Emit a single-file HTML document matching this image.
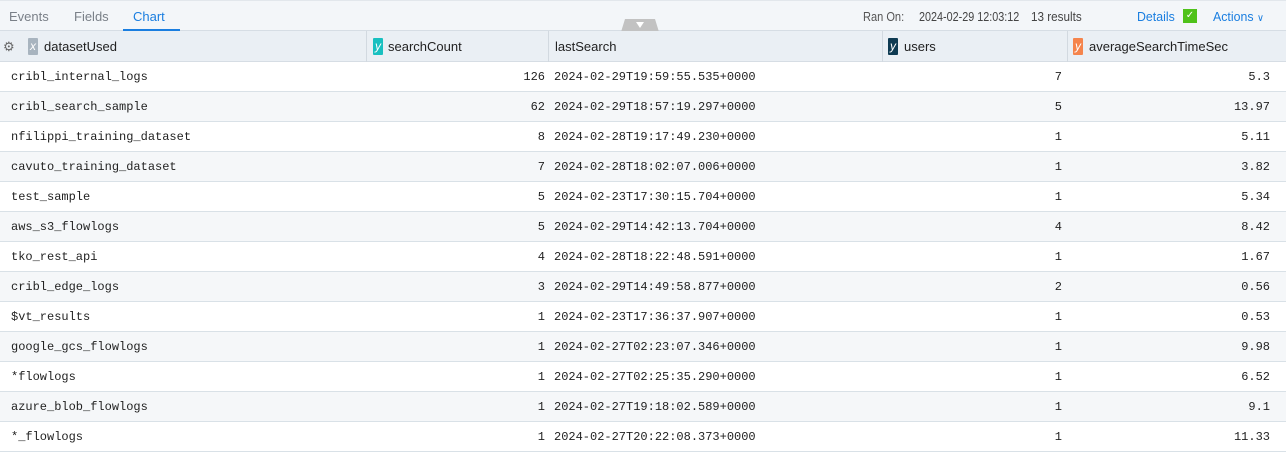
<!DOCTYPE html>
<html><head><meta charset="utf-8"><style>
*{box-sizing:border-box;margin:0;padding:0}
body{width:1286px;height:464px;background:#fff;font-family:"Liberation Sans",sans-serif;overflow:hidden;position:relative}
.top{position:absolute;left:0;top:0;width:1286px;height:31px;background:#f3f6f9;border-top:1px solid #e2e7ec;border-bottom:1px solid #d6dde4}
.tab{position:absolute;top:8px;font-size:13px;color:#7a8088}
.tab.on{color:#1a7ee0}
.ul{position:absolute;top:28px;height:2px;background:#1a7ee0}
.info{position:absolute;top:8px;font-size:13px;color:#555;white-space:nowrap;transform-origin:0 0}
.blue{color:#1a7ee0}
.chk{position:absolute;left:1183px;top:8px;width:14px;height:14px;background:#4fc21a;color:#fff;font-size:10px;text-align:center;line-height:14px}
.hdr{position:absolute;left:0;top:31px;width:1286px;height:31px;background:#eaeff4;border-bottom:1px solid #d6dde4}
.hc{position:absolute;top:0;height:31px;border-right:1px solid #d2d9e0;font-size:13px;color:#222;line-height:31px}
.b{position:absolute;top:7px;width:10px;height:17px;color:#fff;font-size:12px;font-style:italic;line-height:17px;text-align:center;border-radius:1px}
.row{position:absolute;left:0;width:1286px;height:30px;border-bottom:1px solid #d9e1e7;font-family:"Liberation Mono",monospace;font-size:12px;color:#222;line-height:30px}
.row span{position:absolute;top:0}
.g{background:#f5f7f9}
.r{text-align:right}
</style></head><body>
<div class="top">
<div class="tab" style="left:9px">Events</div>
<div class="tab" style="left:74px">Fields</div>
<div class="tab on" style="left:133px">Chart</div>
<div class="ul" style="left:123px;width:57px"></div>
<svg style="position:absolute;left:621px;top:18px" width="40" height="13"><polygon points="4,0 34,0 38,13 0,13" fill="#c2c2c2"/><polygon points="15,3 23,3 19,9" fill="#fff"/></svg>
<div class="info" style="left:863px;transform:scaleX(0.85)">Ran On:</div>
<div class="info" style="left:919px;color:#444;transform:scaleX(0.83)">2024-02-29 12:03:12</div>
<div class="info" style="left:1031px;color:#444;transform:scaleX(0.9)">13 results</div>
<div class="info blue" style="left:1137px;transform:scaleX(0.95)">Details</div>
<div class="chk">✓</div>
<div class="info blue" style="left:1213px;transform:scaleX(0.95)">Actions <span style="font-size:10px">∨</span></div>
</div>
<div class="hdr">
<div class="hc" style="left:0;width:367px"><span style="position:absolute;left:3px;top:0;color:#666;font-size:13px">⚙</span><span class="b" style="left:28px;background:#a8b4bf">x</span><span style="position:absolute;left:44px">datasetUsed</span></div>
<div class="hc" style="left:367px;width:182px"><span class="b" style="left:6px;background:#19c0c0">y</span><span style="position:absolute;left:21px">searchCount</span></div>
<div class="hc" style="left:549px;width:334px"><span style="position:absolute;left:6px">lastSearch</span></div>
<div class="hc" style="left:883px;width:185px"><span class="b" style="left:5px;background:#0e3a52">y</span><span style="position:absolute;left:21px">users</span></div>
<div class="hc" style="left:1068px;width:218px;border:none"><span class="b" style="left:5px;background:#f5844c">y</span><span style="position:absolute;left:21px">averageSearchTimeSec</span></div>
</div>
<div class="row" style="top:62px"><span style="left:11px">cribl_internal_logs</span><span class="r" style="left:400px;width:145px">126</span><span style="left:554px">2024-02-29T19:59:55.535+0000</span><span class="r" style="left:900px;width:162px">7</span><span class="r" style="left:1100px;width:170px">5.3</span></div>
<div class="row g" style="top:92px"><span style="left:11px">cribl_search_sample</span><span class="r" style="left:400px;width:145px">62</span><span style="left:554px">2024-02-29T18:57:19.297+0000</span><span class="r" style="left:900px;width:162px">5</span><span class="r" style="left:1100px;width:170px">13.97</span></div>
<div class="row" style="top:122px"><span style="left:11px">nfilippi_training_dataset</span><span class="r" style="left:400px;width:145px">8</span><span style="left:554px">2024-02-28T19:17:49.230+0000</span><span class="r" style="left:900px;width:162px">1</span><span class="r" style="left:1100px;width:170px">5.11</span></div>
<div class="row g" style="top:152px"><span style="left:11px">cavuto_training_dataset</span><span class="r" style="left:400px;width:145px">7</span><span style="left:554px">2024-02-28T18:02:07.006+0000</span><span class="r" style="left:900px;width:162px">1</span><span class="r" style="left:1100px;width:170px">3.82</span></div>
<div class="row" style="top:182px"><span style="left:11px">test_sample</span><span class="r" style="left:400px;width:145px">5</span><span style="left:554px">2024-02-23T17:30:15.704+0000</span><span class="r" style="left:900px;width:162px">1</span><span class="r" style="left:1100px;width:170px">5.34</span></div>
<div class="row g" style="top:212px"><span style="left:11px">aws_s3_flowlogs</span><span class="r" style="left:400px;width:145px">5</span><span style="left:554px">2024-02-29T14:42:13.704+0000</span><span class="r" style="left:900px;width:162px">4</span><span class="r" style="left:1100px;width:170px">8.42</span></div>
<div class="row" style="top:242px"><span style="left:11px">tko_rest_api</span><span class="r" style="left:400px;width:145px">4</span><span style="left:554px">2024-02-28T18:22:48.591+0000</span><span class="r" style="left:900px;width:162px">1</span><span class="r" style="left:1100px;width:170px">1.67</span></div>
<div class="row g" style="top:272px"><span style="left:11px">cribl_edge_logs</span><span class="r" style="left:400px;width:145px">3</span><span style="left:554px">2024-02-29T14:49:58.877+0000</span><span class="r" style="left:900px;width:162px">2</span><span class="r" style="left:1100px;width:170px">0.56</span></div>
<div class="row" style="top:302px"><span style="left:11px">$vt_results</span><span class="r" style="left:400px;width:145px">1</span><span style="left:554px">2024-02-23T17:36:37.907+0000</span><span class="r" style="left:900px;width:162px">1</span><span class="r" style="left:1100px;width:170px">0.53</span></div>
<div class="row g" style="top:332px"><span style="left:11px">google_gcs_flowlogs</span><span class="r" style="left:400px;width:145px">1</span><span style="left:554px">2024-02-27T02:23:07.346+0000</span><span class="r" style="left:900px;width:162px">1</span><span class="r" style="left:1100px;width:170px">9.98</span></div>
<div class="row" style="top:362px"><span style="left:11px">*flowlogs</span><span class="r" style="left:400px;width:145px">1</span><span style="left:554px">2024-02-27T02:25:35.290+0000</span><span class="r" style="left:900px;width:162px">1</span><span class="r" style="left:1100px;width:170px">6.52</span></div>
<div class="row g" style="top:392px"><span style="left:11px">azure_blob_flowlogs</span><span class="r" style="left:400px;width:145px">1</span><span style="left:554px">2024-02-27T19:18:02.589+0000</span><span class="r" style="left:900px;width:162px">1</span><span class="r" style="left:1100px;width:170px">9.1</span></div>
<div class="row" style="top:422px"><span style="left:11px">*_flowlogs</span><span class="r" style="left:400px;width:145px">1</span><span style="left:554px">2024-02-27T20:22:08.373+0000</span><span class="r" style="left:900px;width:162px">1</span><span class="r" style="left:1100px;width:170px">11.33</span></div>
</body></html>
